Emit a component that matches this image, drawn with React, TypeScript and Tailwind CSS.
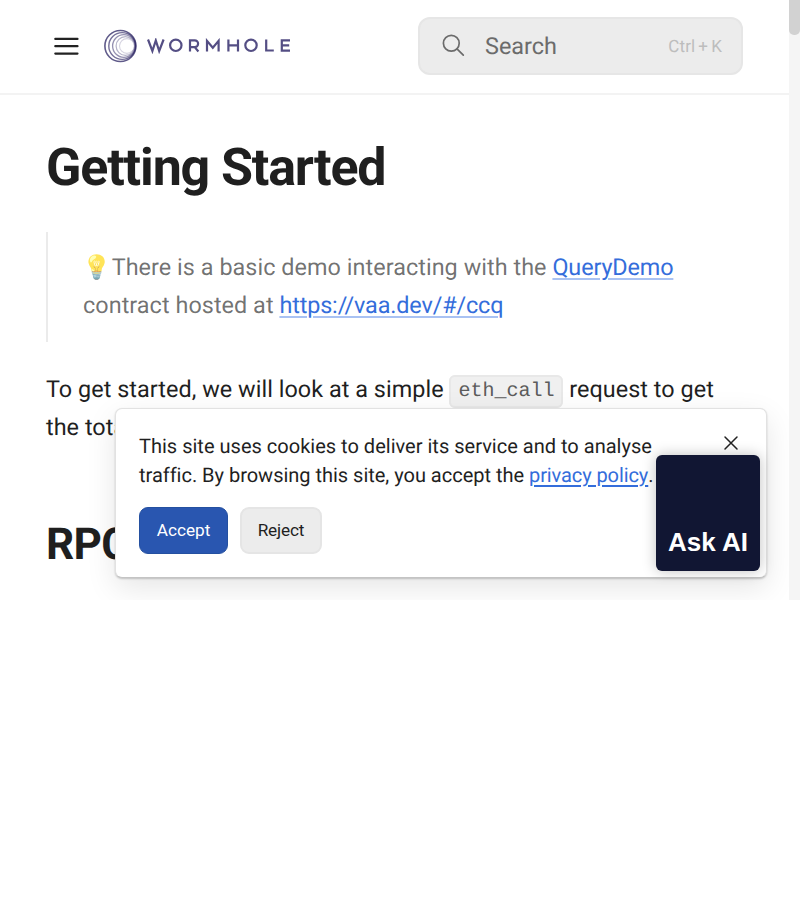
const rings = [
  { cx: 16.4, r: 15.5, w: 1.6, o: 0.75 },
  { cx: 18.2, r: 13.4, w: 1.4, o: 0.65 },
  { cx: 19.9, r: 11.3, w: 1.3, o: 0.5 },
  { cx: 21.4, r: 9.3, w: 1.2, o: 0.35 },
  { cx: 22.9, r: 7.4, w: 1.1, o: 0.2 },
];

function Logo() {
  return (
    <div className="ml-[25px] flex h-[34px] items-center">
      <svg width="34" height="34" viewBox="0 0 34 34" fill="none" stroke="#2b2463">
        {rings.map((r) => (
          <circle key={r.r} cx={r.cx} cy="17" r={r.r} strokeWidth={r.w} opacity={r.o} />
        ))}
      </svg>
      <svg className="ml-[9px]" width="143" height="16" viewBox="0 0 143 16" fill="none" stroke="#544e84" strokeWidth="2.2">
        <path d="M1 1.5l4.4 11.5L8.8 2.5l3.4 10.5L16.6 1.5" />
        <circle cx="28.8" cy="7.3" r="5.7" />
        <path d="M43 13.5V2.3h4.7a3.4 3.4 0 0 1 0 6.8H43M47.7 9.1l3.7 4.4" />
        <path d="M60 13.5V2.9l5.8 6.9 5.8-6.9v10.6" />
        <path d="M81.4 1.5v12M91 1.5v12M81.4 7.3H91" />
        <circle cx="104" cy="7.3" r="5.7" />
        <path d="M119.2 1.5v11h7.6" />
        <path d="M143 2.4h-8.2v10.2h8.2M134.8 7.3h7.4" />
      </svg>
    </div>
  );
}

function Header() {
  return (
    <header className="flex h-[95px] shrink-0 items-start border-b-2 border-[#f3f3f3] pl-[54px]">
      <svg className="mt-[36px]" width="25" height="20" viewBox="0 0 25 20" stroke="#222" strokeWidth="2.2" strokeLinecap="round">
        <path d="M1.3 2.9h22.2M1.3 10.2h22.2M1.3 17.6h22.2" />
      </svg>
      <div className="mt-[29px]">
        <Logo />
      </div>
      <div className="mr-[46px] ml-auto mt-[17px] flex h-[58px] w-[325px] items-center rounded-[12px] border-2 border-[#e6e6e6] bg-[#ececec] pr-[19px] pl-[22px] text-[#6b6b6b]">
        <svg width="24" height="24" viewBox="0 0 24 24" fill="none" stroke="#6b6b6b" strokeWidth="1.7" strokeLinecap="round">
          <circle cx="9.3" cy="9.2" r="7.9" />
          <path d="M15 14.9l6.3 6.2" />
        </svg>
        <span className="mt-px ml-[19px] text-[23.4px]">Search</span>
        <span className="mt-[3px] ml-auto text-[17px] text-[#bdbdbd] [word-spacing:-1.2px] tracking-[0.1px]">Ctrl + K</span>
      </div>
    </header>
  );
}

const link =
  "text-[#346ddb] underline decoration-[#a9c2f3] decoration-2 underline-offset-[3px] tracking-[-0.14px]";

function Article() {
  return (
    <main className="flex flex-col pl-[46px] text-[23.4px] leading-[38px] text-[#1f1f1f]">
      <h1 className="mt-[41px] h-[64px] text-[52px] leading-[64px] font-bold tracking-[-1.17px] whitespace-nowrap">
        Getting Started
      </h1>
      <blockquote className="mt-[32px] h-[110px] border-l-2 border-[#ebebeb] pt-[16px] pl-[35px] tracking-[0.045px] whitespace-nowrap text-[#1f1f1f]/65">
        <p>
          <span className="-ml-[0.5px]">💡</span>There is a basic demo interacting with the{" "}
          <a className={link}>QueryDemo</a>
          <br />
          contract hosted at <a className={link}>https://vaa.dev/#/ccq</a>
        </p>
      </blockquote>
      <p className="mt-[28px] h-[76px] tracking-[0.04px] whitespace-nowrap">
        To get started, we will look at a simple{" "}
        <code className="rounded-[6px] border-2 border-[#e8e8e8] bg-[#f0f0f0] px-[7px] pt-[3px] pb-[3px] align-[1px] font-['Liberation_Mono',monospace] text-[20px] leading-none tracking-normal text-[#5c5c5c]">
          eth_call
        </code>{" "}
        request to get
        <br />
        the total
      </p>
      <h2 className="mt-[70px] text-[44px] leading-[56px] font-bold tracking-[-0.6px]">RPC</h2>
    </main>
  );
}

function CookieBanner() {
  return (
    <section className="absolute top-[408px] left-[115px] flex h-[170px] w-[652px] flex-col rounded-[7px] border border-[#e2e2e2] border-b-[#c4c4c4] bg-white pt-[23px] pl-[23px] text-[#1f1f1f] shadow-[0_1px_2px_rgba(0,0,0,0.2),0_10px_30px_rgba(0,0,0,0.1)]">
      <p className="text-[20.05px] leading-[29px] whitespace-nowrap">
        This site uses cookies to deliver its service and to analyse
        <br />
        <span className="tracking-[-0.03px]">
          traffic. By browsing this site, you accept the{" "}
          <a className="tracking-[-0.1px] text-[#346ddb] underline decoration-2 underline-offset-[3px]">privacy policy</a>.
        </span>
      </p>
      <div className="mt-[17px] flex gap-3 text-[17.2px]">
        <button className="h-[47px] w-[89px] rounded-[9px] border border-[#2450a0] bg-[#2956b0] text-white">
          Accept
        </button>
        <button className="h-[47px] w-[82px] rounded-[9px] border-2 border-[#e5e5e5] bg-[#ececec] tracking-[-0.15px]">
          Reject
        </button>
      </div>
      <svg className="absolute top-[26px] right-[27.5px]" width="16" height="16" viewBox="0 0 16 16" stroke="#222" strokeWidth="1.5" strokeLinecap="round">
        <path d="M2 2l12 12M14 2L2 14" />
      </svg>
    </section>
  );
}

export default function App() {
  return (
    <div className="h-[900px] w-[800px] bg-white font-[Roboto,sans-serif] [text-rendering:geometricPrecision]">
      <div className="relative flex h-[600px] overflow-hidden">
        <div className="flex w-[789px] flex-col">
          <Header />
          <Article />
        </div>
        <CookieBanner />
        <button className="absolute top-[455px] left-[656px] flex h-[116px] w-[104px] items-end justify-center rounded-[6px] bg-[#111633] pb-[9px] font-['Liberation_Sans',Arial,sans-serif] text-[26px] font-bold whitespace-nowrap text-white shadow-[0_0_14px_rgba(0,0,0,0.25)]">
          Ask AI
        </button>
        <div className="z-10 w-[11px] bg-[#f5f5f5]">
          <div className="-mt-2 h-[43px] rounded-[5px] bg-[#d2d2d2]" />
        </div>
      </div>
    </div>
  );
}
